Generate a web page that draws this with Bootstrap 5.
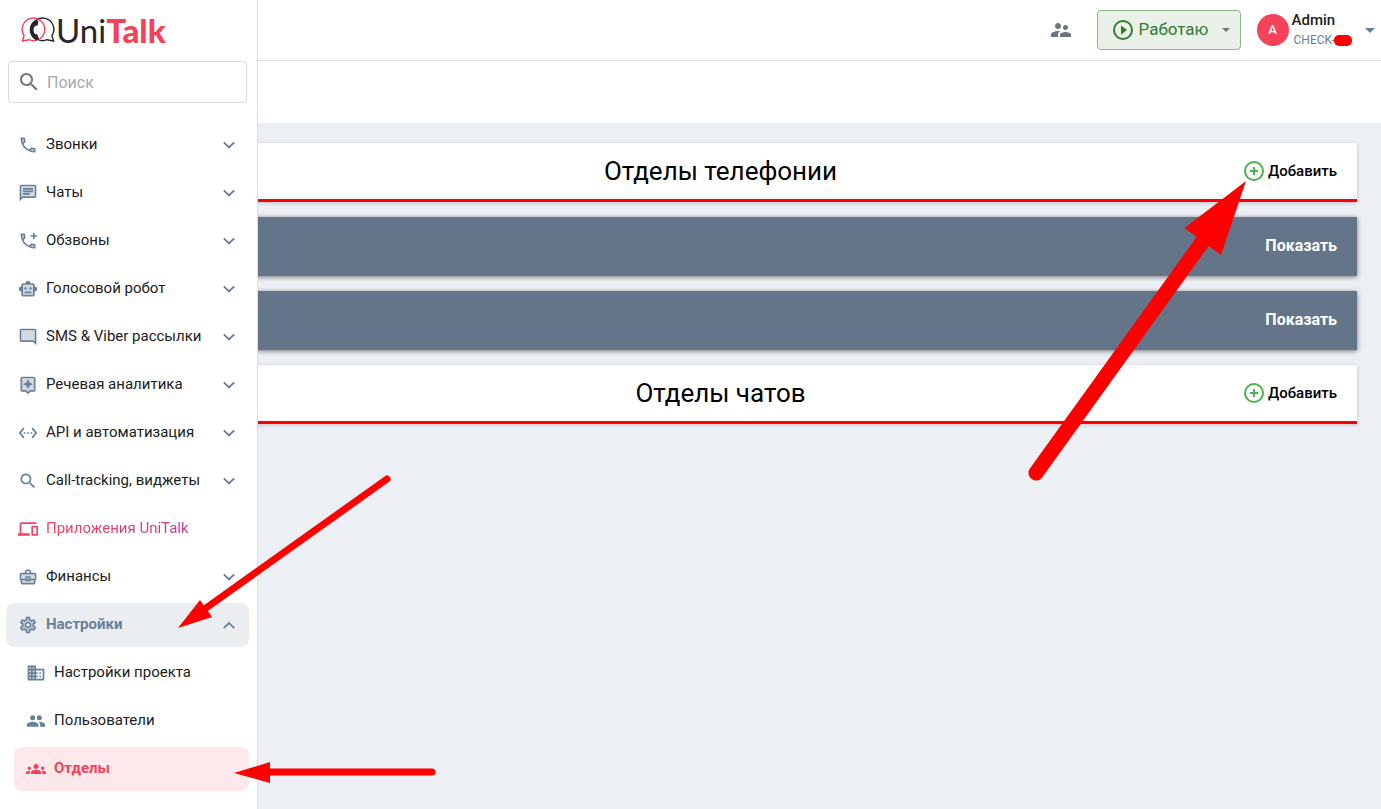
<!DOCTYPE html>
<html lang="ru">
<head>
<meta charset="utf-8">
<meta name="viewport" content="width=device-width, initial-scale=1">
<title>UniTalk — Отделы</title>
<link href="https://cdn.jsdelivr.net/npm/bootstrap@5.3.0/dist/css/bootstrap.min.css" rel="stylesheet">
<style>
  :root { --ut-red:#f3425a; --ut-slate:#66809b; --ut-line:#dcdddf; }
  body { font-family: Roboto, "Noto Sans", sans-serif; background:#eceff4; color:#212121; }
  a { text-decoration:none; }
  .ico { width:20px; height:20px; flex:none; fill:currentColor; }
  .ico-lg { width:24px; height:24px; }

  /* collapsed rail keeps its slot in the layout, the open drawer spills over the page */
  .rail { width:60px; }
  .drawer { width:258px; border-right:1px solid var(--ut-line); z-index:5; }
  .brand { height:61px; padding:0 0 2px 21px; color:#26262a; font-family:Lato, sans-serif; font-size:33px; line-height:40px; }
  .brand b { color:var(--ut-red); font-weight:900; }
  .brand svg { width:35px; height:27px; }
  .search-box { height:42px; margin:0 10px 20px 8px; padding:0 8px; border:1px solid #dadada; border-radius:4px; }
  .search-box .ico { color:#757575; }
  .search-box input { padding:2px 6px 0; font-size:16px; color:#444; box-shadow:none !important; }
  .search-box input::placeholder { color:#a9a9a9; }
  .menu { padding:0 8px 16px 6px; gap:4px; }
  .menu .nav-link { height:44px; padding:0 10px 0 12px; gap:8px; border-radius:8px; color:#212121; font-size:15px; line-height:20px; }
  .menu .nav-link span { padding-bottom:2px; }
  .menu .nav-link .ico { color:var(--ut-slate); }
  .menu .sub { margin-left:8px; }
  .menu .nav-link.apps .ico { color:var(--ut-red); }
  .apps span { background:linear-gradient(90deg,#f3425a,#c23b90); -webkit-background-clip:text; background-clip:text; color:transparent; }
  .menu .nav-link.open { background:#ebeef1; color:var(--ut-slate); font-weight:700; }
  .menu .nav-link.current { background:#fde8eb; color:var(--ut-red); font-weight:700; }
  .menu .nav-link.current .ico { color:var(--ut-red); }

  .topbar { height:61px; border-bottom:1px solid var(--ut-line); padding-right:6px; }
  .status-btn { width:144px; height:40px; padding:0 10px 0 13px; gap:4px; background:#eaf1e9; border:1px solid #8cba8e; border-radius:4px; color:#2e7d32; font-size:17px; }
  .avatar { width:32px; height:32px; background:var(--ut-red); font-size:13px; font-weight:500; }
  .user-name { font-size:15px; line-height:20px; font-weight:500; }
  .user-id { font-size:12px; line-height:20px; color:var(--ut-slate); padding-left:2px; }
  .user-block { margin:0 13px 0 3px; }
  .redact { width:18px; height:11px; border-radius:5px; background:#f00; margin-left:-1px; }
  .strip { height:62px; }
  .content { padding:20px 24px; gap:15px; }
  .panel-bar { height:59px; padding:0 20px 2px; box-shadow:0 1px 4px rgba(0,0,0,.2); }
  .panel-head { padding-bottom:0; border-bottom:3px solid #f00; display:grid; grid-template-columns:1fr auto 1fr; }
  .panel-head h2 { font-size:26px; line-height:32px; font-weight:400; color:#000; grid-column:2; }
  .panel-group { background:#64758a; box-shadow:0 1px 5px rgba(0,0,0,.5); }
  .add-btn { gap:4px; font-size:15px; font-weight:500; color:#000; }
  .add-btn .ico { color:#4caf50; }
  .show-btn { font-size:16px; font-weight:700; color:#fff; }
  .arrow { fill:#f00; stroke:#f00; stroke-linecap:round; z-index:10; pointer-events:none; }
  .arrow path { stroke:none; }
  .arrow-menu { left:170px; top:460px; }
  .arrow-add { right:121px; top:171px; }
</style>
</head>
<body>
<svg class="d-none" aria-hidden="true">
  <symbol id="phone" viewBox="0 0 24 24"><path opacity=".3" d="M6.540 5H5c.1 1.300.350 2.600.750 3.800l1.250-1.250zM15.200 18.210c1.200.400 2.500.700 3.800.760v-1.500l-2.600-.450z"/><path d="M6.540 5c.06.890.210 1.760.450 2.590l-1.200 1.200c-.41-1.200-.67-2.470-.76-3.790h1.510m9.860 12.020c.85.240 1.720.390 2.600.450v1.490c-1.320-.09-2.590-.35-3.800-.75l1.200-1.190M7.500 3H4c-.55 0-1 .45-1 1 0 9.390 7.610 17 17 17 .55 0 1-.45 1-1v-3.490c0-.55-.45-1-1-1-1.240 0-2.450-.2-3.570-.57-.1-.04-.21-.05-.31-.05-.26 0-.51.1-.71.290l-2.200 2.200c-2.830-1.450-5.150-3.760-6.590-6.590l2.200-2.200c.28-.28.36-.67.25-1.020C8.700 6.450 8.500 5.250 8.500 4c0-.55-.45-1-1-1z"/></symbol>
  <symbol id="calls" viewBox="0 0 24 24"><use href="#phone" width="24" height="24"/><path d="M20 2v3h3v2h-3v3h-2V7h-3V5h3V2z"/></symbol>
  <symbol id="chat" viewBox="0 0 24 24"><path opacity=".3" d="M4 17.170L5.170 16H20V4H4z"/><path d="M20 2H4c-1.100 0-1.990.9-1.990 2L2 22l4-4h14c1.100 0 2-.9 2-2V4c0-1.100-.9-2-2-2zm0 14H5.170L4 17.170V4h16v12zM6 12h8v2H6zm0-3h12v2H6zm0-3h12v2H6z"/></symbol>
  <symbol id="robot" viewBox="0 0 24 24"><path opacity=".3" d="M6 7h12v12H6z"/><path d="M20 9V7c0-1.100-.9-2-2-2h-3c0-1.660-1.340-3-3-3S9 3.340 9 5H6c-1.100 0-2 .9-2 2v2c-1.660 0-3 1.340-3 3s1.340 3 3 3v4c0 1.100.9 2 2 2h12c1.100 0 2-.9 2-2v-4c1.660 0 3-1.340 3-3s-1.340-3-3-3zm-2 10H6V7h12v12zm-9-6c-.83 0-1.500-.67-1.500-1.500S8.170 10 9 10s1.500.670 1.500 1.500S9.830 13 9 13zm7.500-1.500c0 .83-.67 1.500-1.500 1.500s-1.500-.67-1.500-1.500.670-1.500 1.500-1.500 1.500.670 1.500 1.500zM8 15h8v2H8v-2z"/></symbol>
  <symbol id="sms" viewBox="0 0 24 24"><path opacity=".3" d="M20 17.170L18.830 16H4V4h16z"/><path d="M20 2H4c-1.100 0-2 .9-2 2v12c0 1.100.9 2 2 2h14l4 4V4c0-1.100-.9-2-2-2zm0 15.170L18.830 16H4V4h16v13.170z"/></symbol>
  <symbol id="speech" viewBox="0 0 24 24"><path opacity=".3" d="M5 4h14v14h-4.830L12 20.170 9.830 18H5z"/><path d="M19 2H5c-1.110 0-2 .9-2 2v14c0 1.100.89 2 2 2h4l3 3 3-3h4c1.100 0 2-.9 2-2V4c0-1.100-.9-2-2-2zm0 16h-4.830L12 20.170 9.830 18H5V4h14v14zm-7-1l1.880-4.120L18 11l-4.120-1.880L12 5l-1.880 4.120L6 11l4.120 1.880z"/></symbol>
  <symbol id="api" viewBox="0 0 24 24"><path d="M7.770 6.760L6.230 5.480.82 12l5.410 6.520 1.540-1.280L3.420 12l4.350-5.240zM7 13h2v-2H7v2zm10-2h-2v2h2v-2zm-6 2h2v-2h-2v2zm6.770-7.520l-1.540 1.280L20.580 12l-4.350 5.240 1.540 1.280L23.180 12l-5.410-6.520z"/></symbol>
  <symbol id="search" viewBox="0 0 24 24"><path d="M15.500 14h-.79l-.28-.27C15.410 12.590 16 11.110 16 9.500 16 5.910 13.090 3 9.500 3S3 5.910 3 9.500 5.910 16 9.500 16c1.610 0 3.090-.59 4.230-1.570l.27.280v.79l5 4.990L20.490 19l-4.990-5zm-6 0C7.010 14 5 11.990 5 9.500S7.010 5 9.500 5 14 7.010 14 9.500 11.990 14 9.500 14z"/></symbol>
  <symbol id="devices" viewBox="0 0 24 24"><path d="M4 6h18V4H4c-1.100 0-2 .9-2 2v11H0v3h14v-3H4V6zm19 2h-6c-.55 0-1 .45-1 1v10c0 .55.450 1 1 1h6c.55 0 1-.45 1-1V9c0-.55-.45-1-1-1zm-1 10h-4v-8h4v8z"/></symbol>
  <symbol id="case" viewBox="0 0 24 24"><path opacity=".3" d="M4 9h16v5h-1v5H5v-5H4z"/><path d="M20 7h-4V5l-2-2h-4L8 5v2H4c-1.100 0-2 .9-2 2v5c0 .75.400 1.380 1 1.730V19c0 1.110.89 2 2 2h14c1.110 0 2-.89 2-2v-3.280c.59-.35 1-.99 1-1.720V9c0-1.100-.9-2-2-2zM10 5h4v2h-4V5zM4 9h16v5h-5v-3H9v3H4V9zm9 6h-2v-2h2v2zm6 4H5v-3h4v1h6v-1h4v3z"/></symbol>
  <symbol id="gear" viewBox="0 0 24 24"><path opacity=".3" fill-rule="evenodd" d="M11 4h2l1 3 3 1 2-1 1 2-2 2v2l2 2-1 2-2-1-3 1-1 3h-2l-1-3-3-1-2 1-1-2 2-2v-2L4 9l1-2 2 1 3-1zM12 9a3 3 0 1 0 0 6 3 3 0 0 0 0-6z"/><path d="M19.430 12.980c.04-.32.07-.64.07-.98 0-.34-.03-.66-.07-.98l2.110-1.650c.19-.15.24-.42.12-.64l-2-3.460c-.09-.16-.26-.25-.44-.25-.06 0-.12.01-.17.03l-2.490 1c-.52-.4-1.080-.73-1.690-.98l-.38-2.650C14.460 2.180 14.250 2 14 2h-4c-.25 0-.46.18-.49.42l-.38 2.650c-.61.25-1.170.59-1.690.98l-2.490-1c-.06-.02-.12-.03-.18-.03-.17 0-.34.09-.43.25l-2 3.460c-.13.22-.07.49.12.64l2.110 1.650c-.04.32-.07.65-.07.98 0 .33.03.66.07.98l-2.110 1.650c-.19.15-.24.42-.12.64l2 3.460c.09.16.26.25.44.25.06 0 .12-.01.17-.03l2.490-1c.52.4 1.080.73 1.690.98l.38 2.650c.03.24.24.42.49.42h4c.25 0 .46-.18.49-.42l.38-2.650c.61-.25 1.170-.59 1.690-.98l2.490 1c.06.02.12.03.18.03.17 0 .34-.09.43-.25l2-3.460c.12-.22.07-.49-.12-.64l-2.110-1.650zm-1.980-1.710c.04.31.05.52.05.73 0 .21-.02.43-.05.73l-.14 1.130.89.7 1.080.84-.7 1.210-1.270-.51-1.040-.42-.9.68c-.43.32-.84.56-1.250.73l-1.060.43-.16 1.130-.2 1.350h-1.400l-.19-1.350-.16-1.130-1.060-.43c-.43-.18-.83-.41-1.230-.71l-.91-.7-1.060.43-1.270.51-.7-1.210 1.080-.84.89-.7-.14-1.130c-.03-.31-.05-.54-.05-.74s.02-.43.05-.73l.14-1.130-.89-.7-1.080-.84.7-1.210 1.270.51 1.040.42.9-.68c.43-.32.84-.56 1.250-.73l1.060-.43.16-1.130.2-1.350h1.390l.19 1.350.16 1.130 1.060.43c.43.18.83.41 1.230.71l.91.7 1.060-.43 1.270-.51.7 1.210-1.070.85-.89.7.14 1.130zM12 8c-2.210 0-4 1.790-4 4s1.790 4 4 4 4-1.790 4-4-1.790-4-4-4zm0 6c-1.100 0-2-.9-2-2s.9-2 2-2 2 .9 2 2-.9 2-2 2z"/></symbol>
  <symbol id="building" viewBox="0 0 24 24"><path opacity=".3" d="M4 5h6v14H4z"/><path d="M12 7V3H2v18h20V7H12zM6 19H4v-2h2v2zm0-4H4v-2h2v2zm0-4H4V9h2v2zm0-4H4V5h2v2zm4 12H8v-2h2v2zm0-4H8v-2h2v2zm0-4H8V9h2v2zm0-4H8V5h2v2zm10 12h-8v-2h2v-2h-2v-2h2v-2h-2V9h8v10zm-2-8h-2v2h2v-2zm0 4h-2v2h2v-2z"/></symbol>
  <symbol id="people" viewBox="0 0 24 24"><circle cx="16" cy="8" r="3"/><circle cx="8" cy="8" r="3"/><path d="M8 13c-2.330 0-7 1.170-7 3.500V19h14v-2.500c0-2.330-4.670-3.500-7-3.500zm8 0c-.29 0-.62.02-.97.050 1.160.84 1.970 1.970 1.970 3.450V19h6v-2.500c0-2.330-4.670-3.500-7-3.500z"/></symbol>
  <symbol id="groups" viewBox="0 0 24 24"><path d="M12 12.750c1.630 0 3.070.39 4.240.9 1.080.48 1.760 1.560 1.760 2.730V18H6v-1.610c0-1.180.68-2.260 1.760-2.730 1.170-.52 2.610-.91 4.240-.91zM4 13c1.100 0 2-.9 2-2s-.9-2-2-2-2 .9-2 2 .9 2 2 2zm1.130 1.100c-.37-.06-.74-.1-1.130-.1-.99 0-1.930.21-2.780.58C.48 14.900 0 15.620 0 16.430V18h4.500v-1.610c0-.83.23-1.610.63-2.290zM20 13c1.100 0 2-.9 2-2s-.9-2-2-2-2 .9-2 2 .9 2 2 2zm4 3.430c0-.81-.48-1.530-1.220-1.850-.85-.37-1.790-.58-2.780-.58-.39 0-.76.04-1.130.1.4.68.63 1.460.63 2.290V18H24v-1.570zM12 6c1.660 0 3 1.340 3 3s-1.340 3-3 3-3-1.340-3-3 1.340-3 3-3z"/></symbol>
  <symbol id="supervisor" viewBox="0 0 24 24"><path d="M16.500 12c1.380 0 2.490-1.120 2.490-2.500S17.880 7 16.500 7C15.120 7 14 8.120 14 9.500s1.120 2.500 2.500 2.500zM9 11c1.660 0 2.990-1.340 2.990-3S10.660 5 9 5C7.340 5 6 6.340 6 8s1.340 3 3 3zm7.500 3c-1.830 0-5.500.92-5.500 2.750V19h11v-2.250c0-1.830-3.670-2.750-5.500-2.750zM9 13c-2.330 0-7 1.170-7 3.500V19h7v-2.250c0-.85.33-2.340 2.370-3.470C10.500 13.100 9.660 13 9 13z"/></symbol>
  <symbol id="down" viewBox="0 0 24 24"><path d="M6.500 8L12 13.300 17.500 8l1.500 1.600-7 6.900-7-6.900z"/></symbol>
  <symbol id="up" viewBox="0 0 24 24"><path d="M6.500 16.500L12 11.200l5.500 5.300 1.500-1.600L12 8l-7 6.900z"/></symbol>
  <symbol id="play" viewBox="0 0 24 24"><path fill-rule="evenodd" d="M12 2a10 10 0 1 0 0 20 10 10 0 0 0 0-20zm0 2a8 8 0 1 1 0 16 8 8 0 0 1 0-16zM10 7.500v9l6-4.500z"/></symbol>
  <symbol id="plus" viewBox="0 0 20 20"><path fill-rule="evenodd" d="M10 0a10 10 0 1 0 0 20 10 10 0 0 0 0-20zm0 2a8 8 0 1 1 0 16 8 8 0 0 1 0-16zM9 6v3H6v2h3v3h2v-3h3V9h-3V6z"/></symbol>
  <symbol id="caret" viewBox="0 0 10 5"><path d="M0 0h10L5 5z"/></symbol>
</svg>

<div class="d-flex min-vh-100 position-relative">
  <div class="rail flex-shrink-0 d-flex">
    <aside class="drawer bg-white flex-shrink-0 position-relative">
      <a class="brand d-flex align-items-center" href="#" aria-label="UniTalk">
        <svg viewBox="0 0 35 27" fill="none" stroke-width="1.400" aria-hidden="true">
          <path stroke="#26262a" d="M31 19.500A11.300 11.300 0 1 0 26 23.700l6.500 1.300z"/>
          <path stroke="#f3425a" d="M3 19.500A11.300 11.300 0 1 1 8 23.700L1.500 25z"/>
          <path fill="#26262a" d="M15.500 4C6.500 7 6.500 20 15.500 24.500l2.500-1-1.500-5-2.500-.5c-2-2-2-6 0-8l2.500-.5 1-4.500z"/>
        </svg>
        <span>Uni<b>Talk</b></span>
      </a>
      <div class="search-box d-flex align-items-center">
        <label class="d-flex" for="menuSearch" aria-label="Поиск"><svg class="ico ico-lg"><use href="#search"/></svg></label>
        <input class="form-control border-0 bg-transparent" type="text" id="menuSearch" placeholder="Поиск">
      </div>
      <nav class="menu nav flex-column flex-nowrap">
        <a class="nav-link d-flex align-items-center" href="#"><svg class="ico"><use href="#phone"/></svg><span>Звонки</span><svg class="ico ms-auto"><use href="#down"/></svg></a>
        <a class="nav-link d-flex align-items-center" href="#"><svg class="ico"><use href="#chat"/></svg><span>Чаты</span><svg class="ico ms-auto"><use href="#down"/></svg></a>
        <a class="nav-link d-flex align-items-center" href="#"><svg class="ico"><use href="#calls"/></svg><span>Обзвоны</span><svg class="ico ms-auto"><use href="#down"/></svg></a>
        <a class="nav-link d-flex align-items-center" href="#"><svg class="ico"><use href="#robot"/></svg><span>Голосовой робот</span><svg class="ico ms-auto"><use href="#down"/></svg></a>
        <a class="nav-link d-flex align-items-center" href="#"><svg class="ico"><use href="#sms"/></svg><span>SMS &amp; Viber рассылки</span><svg class="ico ms-auto"><use href="#down"/></svg></a>
        <a class="nav-link d-flex align-items-center" href="#"><svg class="ico"><use href="#speech"/></svg><span>Речевая аналитика</span><svg class="ico ms-auto"><use href="#down"/></svg></a>
        <a class="nav-link d-flex align-items-center" href="#"><svg class="ico"><use href="#api"/></svg><span>API и автоматизация</span><svg class="ico ms-auto"><use href="#down"/></svg></a>
        <a class="nav-link d-flex align-items-center" href="#"><svg class="ico"><use href="#search"/></svg><span>Call-tracking, виджеты</span><svg class="ico ms-auto"><use href="#down"/></svg></a>
        <a class="nav-link apps d-flex align-items-center" href="#"><svg class="ico"><use href="#devices"/></svg><span>Приложения UniTalk</span></a>
        <a class="nav-link d-flex align-items-center" href="#"><svg class="ico"><use href="#case"/></svg><span>Финансы</span><svg class="ico ms-auto"><use href="#down"/></svg></a>
        <a class="nav-link open d-flex align-items-center" href="#" aria-expanded="true"><svg class="ico"><use href="#gear"/></svg><span>Настройки</span><svg class="ico ms-auto"><use href="#up"/></svg></a>
        <a class="nav-link sub d-flex align-items-center" href="#"><svg class="ico"><use href="#building"/></svg><span>Настройки проекта</span></a>
        <a class="nav-link sub d-flex align-items-center" href="#"><svg class="ico"><use href="#people"/></svg><span>Пользователи</span></a>
        <a class="nav-link sub current d-flex align-items-center" href="#" aria-current="page"><svg class="ico"><use href="#groups"/></svg><span>Отделы</span></a>
      </nav>
    </aside>
  </div>

  <div class="flex-grow-1">
    <header class="topbar bg-white d-flex align-items-center justify-content-end">
      <button class="btn p-0 border-0 d-flex me-4" type="button" aria-label="Сотрудники"><svg class="ico ico-lg text-secondary"><use href="#supervisor"/></svg></button>
      <button class="btn status-btn d-flex align-items-center me-3" type="button"><svg class="ico ico-lg"><use href="#play"/></svg><span>Работаю</span><svg class="ms-auto" width="8" height="4" fill="#757575"><use href="#caret"/></svg></button>
      <span class="avatar rounded-circle text-white d-flex align-items-center justify-content-center">А</span>
      <div class="user-block">
        <div class="user-name">Admin</div>
        <div class="user-id d-flex align-items-center">CHECK-<span class="redact"></span></div>
      </div>
      <button class="btn p-0 border-0 d-flex" type="button" aria-label="Меню пользователя"><svg width="10" height="5" fill="#66809b"><use href="#caret"/></svg></button>
    </header>
    <div class="strip bg-white"></div>
    <main class="content d-flex flex-column">
      <section class="panel-bar panel-head bg-white align-items-center">
        <h2 class="m-0">Отделы телефонии</h2>
        <button class="btn add-btn p-0 border-0 d-flex align-items-center ms-auto" type="button"><svg class="ico"><use href="#plus"/></svg>Добавить</button>
      </section>
      <section class="panel-bar panel-group d-flex align-items-center justify-content-end">
        <button class="btn show-btn p-0 border-0" type="button">Показать</button>
      </section>
      <section class="panel-bar panel-group d-flex align-items-center justify-content-end">
        <button class="btn show-btn p-0 border-0" type="button">Показать</button>
      </section>
      <section class="panel-bar panel-head bg-white align-items-center">
        <h2 class="m-0">Отделы чатов</h2>
        <button class="btn add-btn p-0 border-0 d-flex align-items-center ms-auto" type="button"><svg class="ico"><use href="#plus"/></svg>Добавить</button>
      </section>
    </main>
  </div>

  <svg class="arrow arrow-menu position-absolute" width="280" height="330" viewBox="170 460 280 330" aria-hidden="true">
    <path d="M178 628l22-28 12 17z"/><line x1="206" y1="608" x2="387" y2="479" stroke-width="7"/>
    <path d="M234 773l36-11v21z"/><line x1="268" y1="772" x2="432" y2="772" stroke-width="7"/>
  </svg>
  <svg class="arrow arrow-add position-absolute" width="240" height="320" viewBox="1020 171 240 320" aria-hidden="true">
    <path d="M1246 181l-61.500 47 36.500 27z"/><line x1="1203" y1="241" x2="1036" y2="473" stroke-width="15"/>
  </svg>
</div>
<script src="https://cdn.jsdelivr.net/npm/bootstrap@5.3.0/dist/js/bootstrap.bundle.min.js"></script>
</body>
</html>
